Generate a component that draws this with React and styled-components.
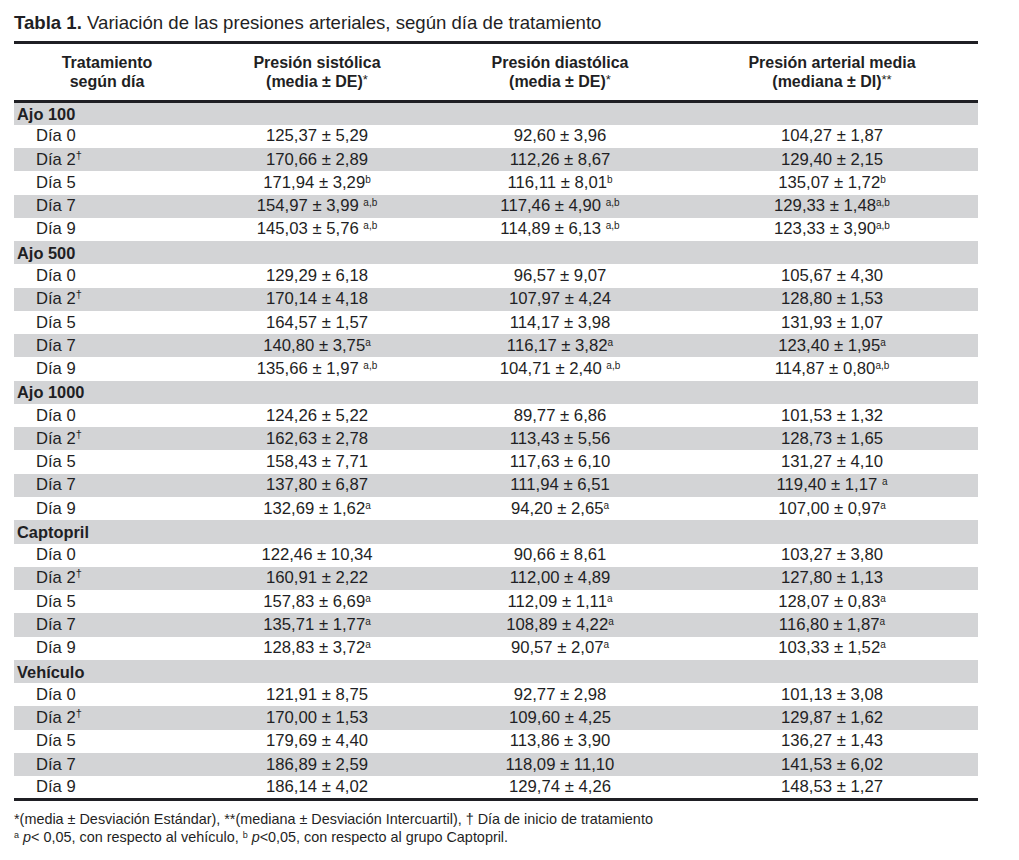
import React from 'react';
import styled, { createGlobalStyle } from 'styled-components';

const GlobalStyle = createGlobalStyle`
  body {
    margin: 0;
    background: #fff;
    color: #1f1f24;
    font-family: "Liberation Sans", Arial, sans-serif;
  }
`;

const Page = styled.div`
  padding: 12px 0 0 14px;
  width: 964px;
`;

const Title = styled.h1`
  margin: 0 0 7px;
  font-size: 18.6px;
  line-height: 22px;
  font-weight: 400;
  b { font-weight: 700; }
`;

const Table = styled.table`
  width: 964px;
  border-collapse: collapse;
  table-layout: fixed;
  border-bottom: 3px solid #1f1f24;
`;

const Head = styled.thead`
  th {
    border-top: 3px solid #1f1f24;
    border-bottom: 3px solid #1f1f24;
  }
`;

const HeadCell = styled.th`
  width: ${p => p.w}px;
  height: 56px;
  padding: 0;
  font-size: 16px;
  line-height: 19px;
  font-weight: 700;
  text-align: center;
  vertical-align: middle;
  sup { font-size: 13px; font-weight: 400; vertical-align: 3px; line-height: 0; }
`;

const Row = styled.tr`
  background: ${p => (p.shaded ? '#d3d4d6' : '#fff')};
  height: 23.27px;
`;

const GroupCell = styled.td`
  padding: 0 0 0 3px;
  font-size: 16.4px;
  font-weight: 700;
  line-height: 20px;
`;

const DayCell = styled.td`
  padding: 0 0 0 22px;
  font-size: 16.6px;
  line-height: 20px;
`;

const ValueCell = styled.td`
  padding: 0;
  text-align: center;
  font-size: 16.7px;
  line-height: 20px;
  white-space: nowrap;
`;

const Sup = styled.sup`
  font-size: ${p => (p.dagger ? 11 : 10)}px;
  vertical-align: ${p => (p.dagger ? 6 : 5)}px;
  line-height: 0;
`;

const Notes = styled.div`
  margin-top: 9px;
  font-size: 14.4px;
  line-height: 18px;
  sup { font-size: 9px; vertical-align: 4px; line-height: 0; }
  i { font-style: italic; }
`;

const groups = [
  {
    name: 'Ajo 100',
    rows: [
      [['125,37 ± 5,29'], ['92,60 ± 3,96'], ['104,27 ± 1,87']],
      [['170,66 ± 2,89'], ['112,26 ± 8,67'], ['129,40 ± 2,15']],
      [['171,94 ± 3,29', 'b'], ['116,11 ± 8,01', 'b'], ['135,07 ± 1,72', 'b']],
      [['154,97 ± 3,99 ', 'a,b'], ['117,46 ± 4,90 ', 'a,b'], ['129,33 ± 1,48', 'a,b']],
      [['145,03 ± 5,76 ', 'a,b'], ['114,89 ± 6,13 ', 'a,b'], ['123,33 ± 3,90', 'a,b']],
    ],
  },
  {
    name: 'Ajo 500',
    rows: [
      [['129,29 ± 6,18'], ['96,57 ± 9,07'], ['105,67 ± 4,30']],
      [['170,14 ± 4,18'], ['107,97 ± 4,24'], ['128,80 ± 1,53']],
      [['164,57 ± 1,57'], ['114,17 ± 3,98'], ['131,93 ± 1,07']],
      [['140,80 ± 3,75', 'a'], ['116,17 ± 3,82', 'a'], ['123,40 ± 1,95', 'a']],
      [['135,66 ± 1,97 ', 'a,b'], ['104,71 ± 2,40 ', 'a,b'], ['114,87 ± 0,80', 'a,b']],
    ],
  },
  {
    name: 'Ajo 1000',
    rows: [
      [['124,26 ± 5,22'], ['89,77 ± 6,86'], ['101,53 ± 1,32']],
      [['162,63 ± 2,78'], ['113,43 ± 5,56'], ['128,73 ± 1,65']],
      [['158,43 ± 7,71'], ['117,63 ± 6,10'], ['131,27 ± 4,10']],
      [['137,80 ± 6,87'], ['111,94 ± 6,51'], ['119,40 ± 1,17 ', 'a']],
      [['132,69 ± 1,62', 'a'], ['94,20 ± 2,65', 'a'], ['107,00 ± 0,97', 'a']],
    ],
  },
  {
    name: 'Captopril',
    rows: [
      [['122,46 ± 10,34'], ['90,66 ± 8,61'], ['103,27 ± 3,80']],
      [['160,91 ± 2,22'], ['112,00 ± 4,89'], ['127,80 ± 1,13']],
      [['157,83 ± 6,69', 'a'], ['112,09 ± 1,11', 'a'], ['128,07 ± 0,83', 'a']],
      [['135,71 ± 1,77', 'a'], ['108,89 ± 4,22', 'a'], ['116,80 ± 1,87', 'a']],
      [['128,83 ± 3,72', 'a'], ['90,57 ± 2,07', 'a'], ['103,33 ± 1,52', 'a']],
    ],
  },
  {
    name: 'Vehículo',
    rows: [
      [['121,91 ± 8,75'], ['92,77 ± 2,98'], ['101,13 ± 3,08']],
      [['170,00 ± 1,53'], ['109,60 ± 4,25'], ['129,87 ± 1,62']],
      [['179,69 ± 4,40'], ['113,86 ± 3,90'], ['136,27 ± 1,43']],
      [['186,89 ± 2,59'], ['118,09 ± 11,10'], ['141,53 ± 6,02']],
      [['186,14 ± 4,02'], ['129,74 ± 4,26'], ['148,53 ± 1,27']],
    ],
  },
];

const days = ['0', '2', '5', '7', '9'];

export default function App() {
  return (
    <Page>
      <GlobalStyle />
      <Title><b>Tabla 1.</b> Variación de las presiones arteriales, según día de tratamiento</Title>
      <Table>
        <Head>
          <tr>
            <HeadCell w={186}>Tratamiento<br />según día</HeadCell>
            <HeadCell w={234}>Presión sistólica<br />(media ± DE)<sup>*</sup></HeadCell>
            <HeadCell w={252}>Presión diastólica<br />(media ± DE)<sup>*</sup></HeadCell>
            <HeadCell w={292}>Presión arterial media<br />(mediana ± DI)<sup>**</sup></HeadCell>
          </tr>
        </Head>
        <tbody>
          {groups.map(g => (
            <React.Fragment key={g.name}>
              <Row shaded>
                <GroupCell colSpan={4}>{g.name}</GroupCell>
              </Row>
              {g.rows.map((cells, i) => (
                <Row key={i} shaded={i % 2 === 1}>
                  <DayCell>Día {days[i]}{i === 1 && <Sup dagger>†</Sup>}</DayCell>
                  {cells.map(([v, s], j) => (
                    <ValueCell key={j}>{v}{s && <Sup>{s}</Sup>}</ValueCell>
                  ))}
                </Row>
              ))}
            </React.Fragment>
          ))}
        </tbody>
      </Table>
      <Notes>
        <div>*(media ± Desviación Estándar), **(mediana ± Desviación Intercuartil), † Día de inicio de tratamiento</div>
        <div><sup>a</sup> <i>p</i>&lt; 0,05, con respecto al vehículo, <sup>b</sup> <i>p</i>&lt;0,05, con respecto al grupo Captopril.</div>
      </Notes>
    </Page>
  );
}
